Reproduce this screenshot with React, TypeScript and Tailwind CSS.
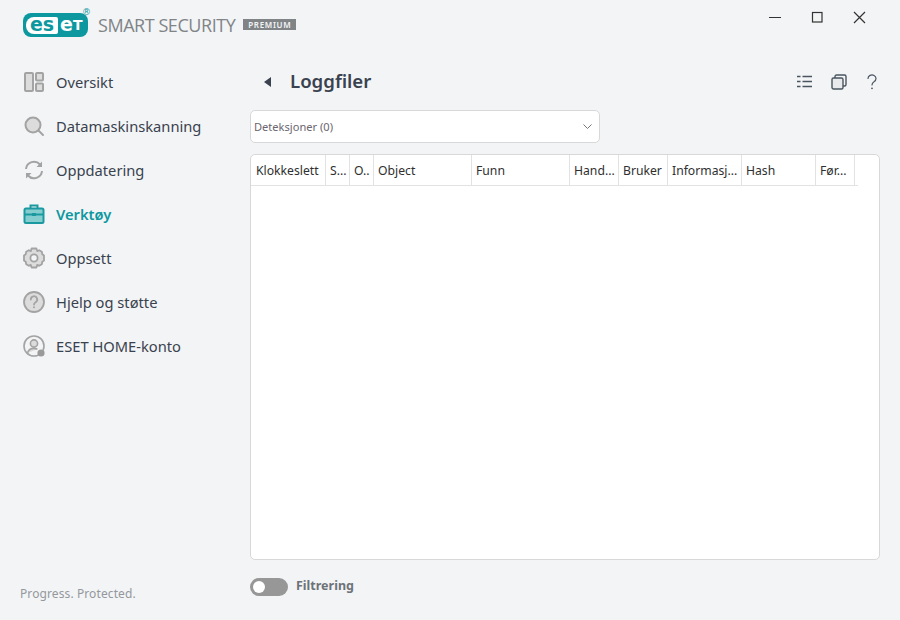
import React from "react";

const nav = [
  { label: "Oversikt", icon: <svg width="22" height="22" viewBox="0 0 22 22" fill="#dcdcdc" stroke="#a3a3a3" strokeWidth="2"><rect x="2" y="2" width="8" height="18" rx="1"/><rect x="13" y="2" width="7" height="7.5" rx="1"/><rect x="13" y="12.5" width="7" height="7.500" rx="1"/></svg> },
  { label: "Datamaskinskanning", icon: <svg width="22" height="22" viewBox="0 0 22 22" fill="#dcdcdc" stroke="#a3a3a3" strokeWidth="2"><circle cx="10" cy="10" r="7.500"/><path d="M15.500 15.500L20 20" strokeLinecap="round" fill="none"/></svg> },
  { label: "Oppdatering", icon: <svg width="22" height="22" viewBox="0 0 22 22" fill="none" stroke="#a3a3a3" strokeWidth="2"><path d="M3 10a8 8 0 0 1 14-4.500l1.500 1.500"/><path d="M19 12a8 8 0 0 1-14 4.500L3.500 15"/><path d="M19 2.500v5.500h-5.500" fill="#a3a3a3" stroke="none"/><path d="M3 19.500V14h5.500" fill="#a3a3a3" stroke="none"/></svg> },
  { label: "Verktøy", active: true, icon: <svg width="22" height="22" viewBox="0 0 22 22" fill="#86cdd0" stroke="#1a9aa0" strokeWidth="2"><rect x="1.500" y="5.500" width="19" height="14.500" rx="1.500"/><path d="M7.500 5.500V2.500h7v3" fill="none"/><path d="M1.500 11.500h19" fill="none"/><path d="M9 11.500h4" strokeWidth="3" fill="none"/></svg> },
  { label: "Oppsett", icon: <svg width="22" height="22" viewBox="0 0 22 22" fill="#dcdcdc" stroke="#a3a3a3" strokeWidth="1.800" strokeLinejoin="round"><path d="M8.600 1.500h4.800l.8 2.600 2-.9 2.600 1.600.5 2.400 1.700 1.300v5l-1.700 1.300-.5 2.400-2.600 1.600-2-.9-.8 2.600H8.600l-.8-2.600-2 .9-2.600-1.600-.5-2.400L1 13.500v-5l1.700-1.300.5-2.400 2.600-1.600 2 .9z"/><circle cx="11" cy="11" r="3.600" fill="#f3f4f6"/></svg> },
  { label: "Hjelp og støtte", icon: <svg width="22" height="22" viewBox="0 0 22 22" fill="#dcdcdc" stroke="#a3a3a3" strokeWidth="1.800"><circle cx="11" cy="11" r="10"/><path d="M7.800 8.500A3.200 3.200 0 1 1 12.600 11.200c-1 .6-1.600 1.100-1.600 2.400" fill="none" strokeLinecap="round"/><circle cx="11" cy="16.300" r="1" fill="#a3a3a3" stroke="none"/></svg> },
  { label: "ESET HOME-konto", icon: <svg width="22" height="22" viewBox="0 0 22 22" fill="none" stroke="#a3a3a3" strokeWidth="1.600"><circle cx="11" cy="11" r="10"/><circle cx="11" cy="8.500" r="3.600" fill="#dcdcdc"/><path d="M4.500 18c.8-3 3.200-4.600 6.500-4.600 1.300 0 2.400.3 3.400.8" fill="#dcdcdc"/><circle cx="18" cy="18" r="3.600" fill="#9a9a9a" stroke="none"/></svg> },
];

const cols: [string, number][] = [
  ["Klokkeslett", 75], ["S...", 24], ["O..", 24], ["Object", 98], ["Funn", 98], ["Hand...", 49], ["Bruker", 49], ["Informasj...", 74], ["Hash", 74], ["Før...", 39],
];

export default function App() {
  return (
    <div className="w-[900px] h-[620px] bg-[#f3f4f6] flex flex-col overflow-hidden font-['Noto_Sans',sans-serif] text-[#39424e]">
      <div className="h-[60px] flex justify-between shrink-0">
        <div className="flex items-start pl-[23px] pt-[13px]">
          <div className="relative w-[65px] h-[24px] rounded-[8px] bg-[#0d98a0] flex items-center pl-[3px] font-['DejaVu_Sans',sans-serif] font-bold leading-none">
            <span className="bg-white text-[#0d98a0] rounded-l-[8px] rounded-r-[2px] h-[17px] w-[32px] flex items-center justify-center text-[19px] pb-[2px]">es</span>
            <span className="text-white pl-[2px] text-[19px] pb-[2px]">e</span>
            <span className="text-white text-[14px] pb-[1px]">T</span>
            <span className="absolute -right-[3px] -top-[5px] text-[#0d98a0] text-[9px] font-normal">®</span>
          </div>
          <span className="ml-[10px] text-[#808487] text-[18px] leading-[24px] tracking-[-0.45px] font-['Open_Sans',sans-serif]">SMART SECURITY</span>
          <span className="ml-[8px] mt-[6px] h-[11px] w-[53px] bg-[#808487] text-[#f3f4f6] text-[8px] leading-[11px] font-semibold tracking-[0.7px] text-center">PREMIUM</span>
        </div>
        <div className="flex items-start pt-[11px] pr-[34px]">
          <svg width="12" height="12" viewBox="0 0 12 12" className="mr-[30px]" stroke="#333" strokeWidth="1"><path d="M0 6.500h12"/></svg>
          <svg width="12" height="12" viewBox="0 0 12 12" className="mr-[30px]" fill="none" stroke="#333" strokeWidth="1.200"><rect x="1.500" y="1.500" width="9.500" height="9.500"/></svg>
          <svg width="13" height="13" viewBox="0 0 13 13" stroke="#333" strokeWidth="1.200"><path d="M1 1l11 11M12 1L1 12"/></svg>
        </div>
      </div>
      <div className="flex-1 flex min-h-0">
        <div className="w-[250px] shrink-0 flex flex-col justify-between">
          <nav className="flex flex-col">
            {nav.map((n) => (
              <div key={n.label} className="h-[44px] flex items-center pl-[23px]">
                <span className="w-[22px] h-[22px] mr-[11px] flex">{n.icon}</span>
                <span className={`text-[14.700px] ${n.active ? "text-[#0d98a0] font-semibold" : "text-[#39424e]"}`}>{n.label}</span>
              </div>
            ))}
          </nav>
          <div className="pl-[20px] pb-[18px] text-[12px] leading-[16px] tracking-[0.1px] text-[#94989c]">Progress. Protected.</div>
        </div>
        <div className="flex-1 pr-[20px] flex flex-col">
          <div className="h-[44px] flex items-center shrink-0">
            <svg width="10" height="12" viewBox="0 0 10 12" className="ml-[13px]" fill="#39424e"><path d="M8 1v10L1 6z"/></svg>
            <h1 className="ml-[17px] text-[18.600px] font-semibold text-[#39424e] leading-none -mt-[2px]">Loggfiler</h1>
            <div className="ml-auto flex items-center pr-[3px]">
              <svg width="16" height="14" viewBox="0 0 16 14" stroke="#4a5560" strokeWidth="1.400" className="mr-[18px]"><path d="M0 1.500h3.500M5.500 1.500H15M0 6.500h3.500M5.500 6.500H15M0 11.500h3.500M5.500 11.500H15"/></svg>
              <svg width="16" height="16" viewBox="0 0 16 16" fill="none" stroke="#4a5560" strokeWidth="1.400" className="mr-[20px]"><rect x="1" y="4" width="11" height="11" rx="1.500" fill="#e8eaec"/><path d="M4 4V2.500A1.500 1.500 0 0 1 5.500 1h8A1.500 1.500 0 0 1 15 2.500v8a1.500 1.500 0 0 1-1.500 1.500H12"/></svg>
              <svg width="10" height="16" viewBox="0 0 10 16" fill="none" stroke="#4a5560" strokeWidth="1.200"><path d="M1 4.500a4 3.700 0 1 1 6 3.300c-1.300.8-2 1.500-2 3.200" strokeLinecap="round"/><circle cx="5" cy="14.300" r=".9" fill="#4a5560" stroke="none"/></svg>
            </div>
          </div>
          <div className="mt-[6px] w-[350px] h-[33px] shrink-0 bg-white rounded-[5px] border border-[#d8d8d8] flex items-center justify-between pl-[3px] pr-[7px]">
            <span className="text-[11.100px] text-[#6b6670] pt-[1px]">Deteksjoner (0)</span>
            <svg width="9" height="6" viewBox="0 0 9 6" fill="none" stroke="#777" strokeWidth="1"><path d="M.5.500L4.500 4.500l4-4"/></svg>
          </div>
          <div className="mt-[11px] h-[406px] shrink-0 bg-white rounded-[5px] border border-[#d8d8d8] overflow-hidden">
            <div className="flex h-[31px] w-[607px] border-b border-[#e2e2e2]">
              {cols.map(([t, w]) => (
                <div key={t} style={{ width: w }} className="h-full shrink-0 border-r border-[#e2e2e2] pl-[4px] first:pl-[5px] pt-[2px] flex items-center text-[12.200px] text-[#2f2f2f] whitespace-nowrap overflow-hidden">{t}</div>
              ))}
            </div>
          </div>
          <div className="mt-[18px] flex items-center h-[18px] shrink-0">
            <span className="relative w-[38px] h-[18px] rounded-full bg-[#979797] shrink-0">
              <span className="absolute left-[3px] top-[3px] w-[12px] h-[12px] rounded-full bg-white"></span>
            </span>
            <span className="ml-[8px] text-[12.500px] font-bold text-[#6d7278] -mt-[2px]">Filtrering</span>
          </div>
        </div>
      </div>
    </div>
  );
}
